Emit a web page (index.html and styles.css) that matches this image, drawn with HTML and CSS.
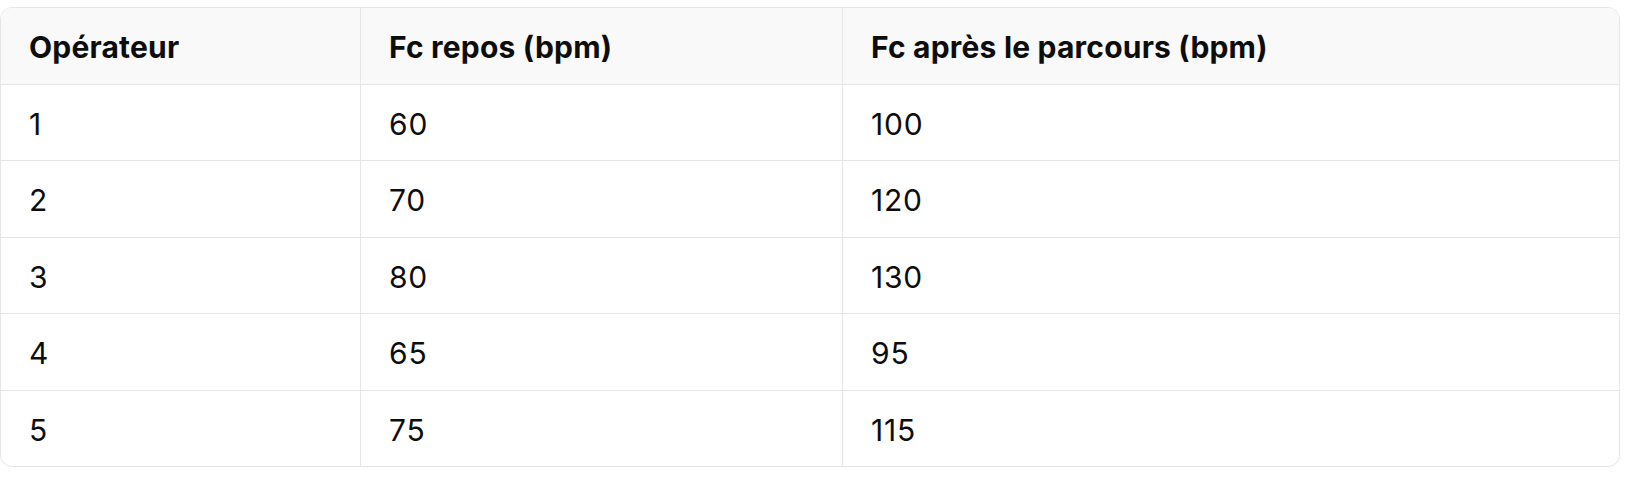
FILE: index.html
```html
<!DOCTYPE html>
<html lang="fr">
<head>
<meta charset="utf-8">
<title>Tableau</title>
<link rel="stylesheet" href="styles.css">
</head>
<body>
<div class="table-wrap">
  <table class="data">
    <thead>
      <tr>
        <th class="c1">Opérateur</th>
        <th class="c2">Fc repos (bpm)</th>
        <th class="c3">Fc après le parcours (bpm)</th>
      </tr>
    </thead>
    <tbody>
      <tr><td>1</td><td>60</td><td>100</td></tr>
      <tr><td>2</td><td>70</td><td>120</td></tr>
      <tr><td>3</td><td>80</td><td>130</td></tr>
      <tr><td>4</td><td>65</td><td>95</td></tr>
      <tr><td>5</td><td>75</td><td>115</td></tr>
    </tbody>
  </table>
</div>
</body>
</html>
```
FILE: styles.css
```css
html, body {
  margin: 0;
  padding: 0;
  background: #ffffff;
}
body {
  padding-top: 7px;
  font-family: Inter, "Liberation Sans", sans-serif;
  color: #0d0d0d;
}
.table-wrap {
  width: 1620px;
  box-sizing: border-box;
  border: 1px solid #e6e6e6;
  border-radius: 12px;
  overflow: hidden;
}
.data {
  width: 100%;
  border-collapse: separate;
  border-spacing: 0;
  table-layout: fixed;
}
.data th, .data td {
  height: 72.5px;
  box-sizing: content-box;
  padding: 3px 0 0 28px;
  text-align: left;
  vertical-align: middle;
  font-size: 30px;
  line-height: 1;
  border-bottom: 1px solid #e6e6e6;
  border-left: 1px solid #e6e6e6;
}
.data th:first-child, .data td:first-child {
  border-left: none;
}
.data tbody tr:last-child td {
  border-bottom: none;
}
.data th {
  background: #f9f9f9;
  font-weight: 700;
  letter-spacing: 0.2px;
}
.data td {
  font-weight: 400;
  letter-spacing: 0.8px;
}
.c1 { width: 331px; }
.c2 { width: 453px; }
.c3 { width: auto; }
```
